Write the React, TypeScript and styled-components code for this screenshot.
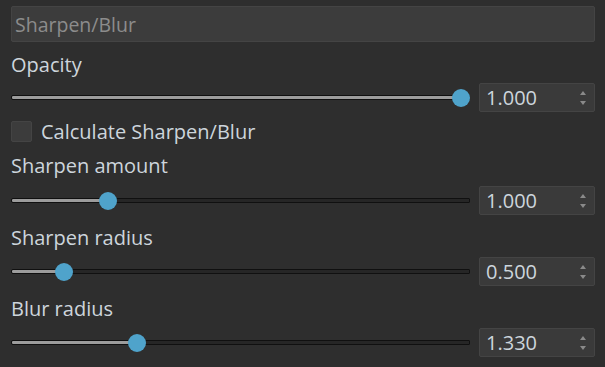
import React from "react";
import styled, { createGlobalStyle } from "styled-components";

const GlobalStyle = createGlobalStyle`
  html, body {
    margin: 0;
    padding: 0;
    background: #2e2e2e;
  }
  body {
    font-family: "Open Sans", "Noto Sans", sans-serif;
  }
`;

const Panel = styled.div`
  width: 605px;
  height: 367px;
  box-sizing: border-box;
  padding: 6px 10px 0 11px;
  background: #2e2e2e;
  display: flex;
  flex-direction: column;
  overflow: hidden;
`;

const Header = styled.div`
  height: 36px;
  box-sizing: border-box;
  background: #3c3c3c;
  border: 1px solid #444444;
  border-radius: 2px;
  display: flex;
  align-items: center;
  padding-left: 3px;
  color: #8c8c8c;
  font-size: 19.5px;
`;

const Label = styled.div<{ $top: number }>`
  margin-top: ${(p) => p.$top}px;
  height: 24px;
  line-height: 24px;
  color: #cdd5dc;
  font-size: 20px;
`;

const SliderRow = styled.div<{ $top: number }>`
  margin-top: ${(p) => p.$top}px;
  display: grid;
  grid-template-columns: 1fr 116px;
  column-gap: 9px;
  align-items: center;
  height: 29px;
`;

const TrackWrap = styled.div`
  position: relative;
  height: 18px;
  display: flex;
  align-items: center;
`;

const Track = styled.div`
  width: 100%;
  height: 3px;
  border: 1px solid #101010;
  border-radius: 2px 1px 1px 2px;
  background: #262626;
`;

const Handle = styled.div`
  position: absolute;
  top: 0;
  width: 18px;
  height: 18px;
  margin-left: -9px;
  border-radius: 50%;
  background: #4fa3cb;
`;

const SpinBox = styled.div`
  height: 29px;
  box-sizing: border-box;
  background: #3a3a3a;
  border: 1px solid #444444;
  border-radius: 2px;
  display: flex;
  align-items: center;
  justify-content: space-between;
  padding: 0 8px 0 6px;
  color: #cdd5dc;
  font-size: 20px;
`;

const Arrows = styled.div`
  display: flex;
  flex-direction: column;
  gap: 6px;
`;

const Arrow = styled.div<{ $down?: boolean }>`
  width: 0;
  height: 0;
  border-left: 3.5px solid transparent;
  border-right: 3.5px solid transparent;
  ${(p) =>
    p.$down
      ? "border-top: 4px solid #8a8a8a;"
      : "border-bottom: 4px solid #8a8a8a;"}
`;

const CheckRow = styled.label`
  margin-top: 9px;
  display: flex;
  align-items: center;
  gap: 9px;
  height: 21px;
  color: #cdd5dc;
  font-size: 20px;
`;

const CheckBox = styled.span`
  width: 21px;
  height: 21px;
  box-sizing: border-box;
  background: #3c3c3c;
  border: 1px solid #444444;
  border-radius: 2px;
`;

const Slider: React.FC<{ value: number; max: number; top: number }> = ({ value, max, top }) => {
  const pct = value / max;
  const left = `calc(9px + (100% - 18px) * ${pct})`;
  return (
    <SliderRow $top={top}>
      <TrackWrap>
        <Track
          style={{
            background: `linear-gradient(to right, #9c9c9c 0, #9c9c9c ${left}, #262626 ${left})`,
          }}
        />
        <Handle style={{ left }} />
      </TrackWrap>
      <SpinBox>
        <span>{value.toFixed(3)}</span>
        <Arrows>
          <Arrow />
          <Arrow $down />
        </Arrows>
      </SpinBox>
    </SliderRow>
  );
};

export default function App() {
  return (
    <>
      <GlobalStyle />
      <Panel>
        <Header>Sharpen/Blur</Header>
        <Label $top={11}>Opacity</Label>
        <Slider value={1} max={1} top={6} />
        <CheckRow>
          <CheckBox />
          Calculate Sharpen/Blur
        </CheckRow>
        <Label $top={12}>Sharpen amount</Label>
        <Slider value={1} max={5} top={8} />
        <Label $top={11}>Sharpen radius</Label>
        <Slider value={0.5} max={5} top={7} />
        <Label $top={11}>Blur radius</Label>
        <Slider value={1.33} max={5} top={7} />
      </Panel>
    </>
  );
}
